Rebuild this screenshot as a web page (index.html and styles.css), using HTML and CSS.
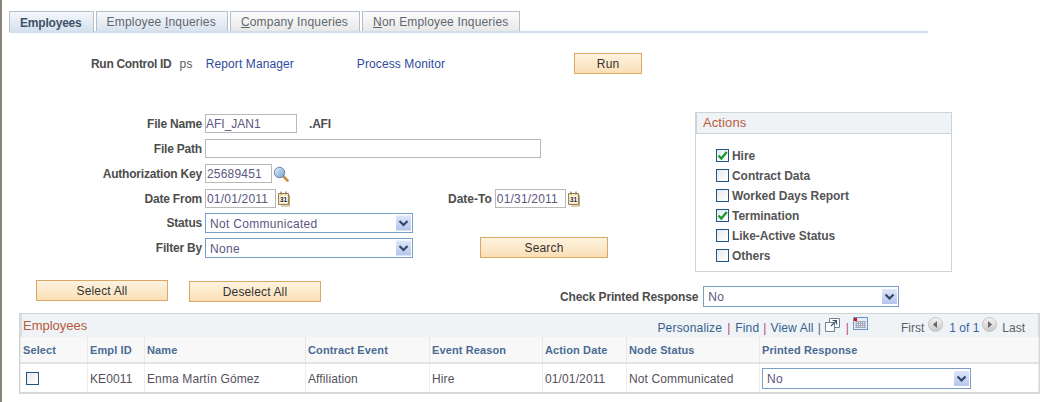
FILE: index.html
```html
<!DOCTYPE html>
<html lang="en">
<head>
<meta charset="utf-8">
<title>Employees</title>
<link rel="stylesheet" href="styles.css">
</head>
<body>
<svg class="defs" width="0" height="0" aria-hidden="true">
  <defs>
    <linearGradient id="arrowbg" x1="0" y1="0" x2="0" y2="1"><stop offset="0" stop-color="#dfe6fa"/><stop offset="1" stop-color="#b4c6ee"/></linearGradient>
    <linearGradient id="navbg" x1="0" y1="0" x2="0" y2="1"><stop offset="0" stop-color="#f4f4f4"/><stop offset="1" stop-color="#c9c9c9"/></linearGradient>
    <linearGradient id="lens" x1="0" y1="0" x2="1" y2="1"><stop offset="0" stop-color="#e6f2fb"/><stop offset="1" stop-color="#6f9fd0"/></linearGradient>
    <symbol id="arrow" viewBox="0 0 15 15">
      <rect width="15" height="15" fill="url(#arrowbg)"/>
      <path d="M3.500 5.500 7.500 9.500 11.500 5.500" fill="none" stroke="#33476b" stroke-width="2.200"/>
    </symbol>
    <symbol id="cal" viewBox="0 0 13 16">
      <path d="M.5 2.500h10v11H.5z" fill="#f3e3b6" stroke="#9a8455"/>
      <path d="M11.500 4v11H3" fill="none" stroke="#b9a674"/>
      <path d="M3 .5v3M8 .5v3" stroke="#6f5f3a"/>
      <rect x="2" y="5" width="7" height="7" fill="#fff"/>
      <text x="5.500" y="11.300" text-anchor="middle" class="cal-day">31</text>
    </symbol>
    <symbol id="lookup" viewBox="0 0 16 16">
      <path d="M10 10l4.500 4.500" stroke="#c98a4b" stroke-width="2.600" stroke-linecap="round"/>
      <circle cx="6.500" cy="6.500" r="5.200" fill="url(#lens)" stroke="#5f86ad"/>
    </symbol>
    <symbol id="check" viewBox="0 0 11 11">
      <path d="M1.500 5.500 4.300 8.500 9.800 2" fill="none" stroke="#129a29" stroke-width="2.200"/>
    </symbol>
  </defs>
</svg>
<div class="page">
  <nav class="tabs">
    <a class="tab tab-active">Employees</a>
    <a class="tab tab-blue">Employee <u>I</u>nqueries</a>
    <a class="tab"><u>C</u>ompany Inqueries</a>
    <a class="tab"><u>N</u>on Employee Inqueries</a>
  </nav>

  <div class="run-row">
    <span class="label run-label">Run Control ID</span>
    <span class="value run-id">ps</span>
    <a class="link report-link">Report Manager</a>
    <a class="link monitor-link">Process Monitor</a>
    <button class="btn btn-run" type="button">Run</button>
  </div>

  <div class="main">
    <div class="form">
      <div class="row">
        <span class="label field-label">File Name</span>
        <span class="input w-name">AFI_JAN1</span>
        <span class="label afi">.AFI</span>
      </div>
      <div class="row">
        <span class="label field-label">File Path</span>
        <span class="input w-path"></span>
      </div>
      <div class="row">
        <span class="label field-label">Authorization Key</span>
        <span class="input w-key">25689451</span>
        <svg class="ico-lookup"><use href="#lookup"/></svg>
      </div>
      <div class="row">
        <span class="label field-label">Date From</span>
        <span class="input w-date">01/01/2011</span>
        <svg class="ico-cal"><use href="#cal"/></svg>
        <span class="label date-to">Date-To</span>
        <span class="input w-date">01/31/2011</span>
        <svg class="ico-cal"><use href="#cal"/></svg>
      </div>
      <div class="row row-select">
        <span class="label field-label">Status</span>
        <span class="select w-select">Not Communicated<svg class="arrow"><use href="#arrow"/></svg></span>
      </div>
      <div class="row row-filter">
        <span class="label field-label">Filter By</span>
        <span class="select w-select">None<svg class="arrow"><use href="#arrow"/></svg></span>
        <button class="btn btn-search" type="button">Search</button>
      </div>
    </div>

    <section class="actions">
      <h2 class="box-title">Actions</h2>
      <ul class="check-list">
        <li><span class="checkbox"><svg class="tick"><use href="#check"/></svg></span>Hire</li>
        <li><span class="checkbox"></span>Contract Data</li>
        <li><span class="checkbox"></span>Worked Days Report</li>
        <li><span class="checkbox"><svg class="tick"><use href="#check"/></svg></span>Termination</li>
        <li><span class="checkbox"></span>Like-Active Status</li>
        <li><span class="checkbox"></span>Others</li>
      </ul>
    </section>
  </div>

  <div class="select-row">
    <button class="btn btn-wide" type="button">Select All</button>
    <button class="btn btn-wide btn-deselect" type="button">Deselect All</button>
    <span class="label check-label">Check Printed Response</span>
    <span class="select w-check">No<svg class="arrow"><use href="#arrow"/></svg></span>
  </div>

  <section class="grid">
    <header class="grid-head">
      <h2 class="grid-title">Employees</h2>
      <div class="grid-tools">
        <a class="link">Personalize</a><i class="sep">|</i><a class="link">Find</a><i class="sep sep-narrow">|</i><a class="link">View All</a><i class="sep sep-dark">|</i>
        <svg class="ico-zoom" width="15" height="14" viewBox="0 0 15 14"><path d="M4.500 .5h10v9h-10z" fill="#fff" stroke="#6d8296"/><path d="M.5 4.500h9v9h-9z" fill="#fff" stroke="#6d8296"/><path d="M6 8l5-5M7.500 2.500h4v4" fill="none" stroke="#42566a" stroke-width="1.200"/></svg>
        <i class="sep sep-tight">|</i>
        <svg class="ico-grid" width="15" height="13" viewBox="0 0 15 13"><rect x=".5" y=".5" width="14" height="12" fill="#e9ecf2" stroke="#6c93d3"/><path d="M2 4.500h11M2 6.500h11M2 8.500h11M2 10.500h11M3.500 4v7M5.500 4v7M7.500 4v7M9.500 4v7M11.500 4v7" stroke="#a3abb9"/><rect x="1" y="1" width="3" height="3" fill="#e01010"/></svg>
        <span class="pager">
          <span class="pg-text">First</span>
          <svg class="ico-nav" width="15" height="15" viewBox="0 0 15 15"><circle cx="7.500" cy="7.500" r="7" fill="url(#navbg)" stroke="#c4c4c4"/><path d="M9 4v7L5 7.500z" fill="#666"/></svg>
          <a class="pg-count">1 of 1</a>
          <svg class="ico-nav ico-next" width="15" height="15" viewBox="0 0 15 15"><circle cx="7.500" cy="7.500" r="7" fill="url(#navbg)" stroke="#c4c4c4"/><path d="M6 4v7l4-3.500z" fill="#666"/></svg>
          <span class="pg-text">Last</span>
        </span>
      </div>
    </header>
    <table class="table">
      <colgroup>
        <col class="c-select"><col class="c-id"><col class="c-name"><col class="c-event"><col class="c-reason"><col class="c-date"><col class="c-node"><col class="c-print">
      </colgroup>
      <thead>
        <tr><th>Select</th><th>Empl ID</th><th>Name</th><th>Contract Event</th><th>Event Reason</th><th>Action Date</th><th>Node Status</th><th>Printed Response</th></tr>
      </thead>
      <tbody>
        <tr>
          <td><span class="checkbox cell-check"></span></td>
          <td>KE0011</td>
          <td>Enma Martín Gómez</td>
          <td>Affiliation</td>
          <td>Hire</td>
          <td>01/01/2011</td>
          <td>Not Communicated</td>
          <td><span class="select w-print">No<svg class="arrow"><use href="#arrow"/></svg></span></td>
        </tr>
      </tbody>
    </table>
  </section>
</div>
</body>
</html>
```
FILE: styles.css
```css
* { box-sizing: border-box; }
html, body { margin: 0; padding: 0; background: #fff; }
body { font: 12px/14px "Liberation Sans", Arial, sans-serif; color: #5a5a5a; overflow: hidden; }
.defs { display: block; height: 0; }
u { text-decoration: underline; }
i { font-style: normal; }
.cal-day { font: bold 6.500px "Liberation Sans", Arial, sans-serif; fill: #222; }

.page { height: 402px; border-left: 2px solid #8a8378; padding-top: 10px; }

/* tabs */
.tabs { display: flex; gap: 2px; margin-left: 7px; width: 919px; height: 23px; align-items: flex-end; border-bottom: 2px solid #d3deeb; }
.tab { display: block; height: 20px; padding: 3px 11px 0 10px; border: 1px solid #b5bfcc; border-bottom: 0; background: linear-gradient(#fcfcfc, #e8e8e8); color: #61666d; letter-spacing: .18px; white-space: nowrap; }
.tab-active { height: 21px; padding: 4px 11px 0 10px; margin-bottom: -1px; background: linear-gradient(#f4f7fb, #d4e0ee); color: #3f5168; font-weight: bold; letter-spacing: -.2px; }
.tab-blue { background: linear-gradient(#f6f8fb, #d8e3f0); }

/* run control row */
.run-row { display: flex; align-items: center; height: 21px; margin: 20px 0 0 89px; }
.label { font-weight: bold; color: #4d4d4d; white-space: nowrap; letter-spacing: -.2px; }
.run-label { letter-spacing: -.3px; }
.value { color: #5a5a5a; letter-spacing: .3px; }
.run-id { margin-left: 8px; }
.link { color: #2f4a9c; white-space: nowrap; letter-spacing: .1px; }
.report-link { margin-left: 13px; }
.monitor-link { margin-left: 63px; }

.btn { display: block; padding: 0; font: 12px "Liberation Sans", Arial, sans-serif; color: #333; border: 1px solid #dba766; background: linear-gradient(#fdf3df, #fbdfb6); letter-spacing: .15px; }
.btn-run { width: 68px; height: 21px; margin-left: 129px; }
.btn-search { width: 128px; height: 21px; margin: -1px 0 0 67px; }
.btn-wide { width: 132px; height: 21px; }
.btn-deselect { margin: 1px 0 0 21px; }

/* main */
.main { display: flex; align-items: flex-start; margin-top: 38px; }
.form { width: 693px; padding-top: 2px; }
.row { display: flex; align-items: center; height: 19px; margin-bottom: 6px; }
.row-select { height: 20px; margin-bottom: 5px; margin-top: -1px; }
.row-filter { height: 20px; margin-bottom: 0; }
.field-label { width: 203px; padding-right: 3px; text-align: right; }
.input { display: block; height: 19px; padding: 2px 0 0 1px; border: 1px solid #b9b9b9; background: #fff; color: #5c5680; letter-spacing: .2px; white-space: nowrap; }
.w-name { width: 92px; padding-left: 0; letter-spacing: 0; }
.w-path { width: 336px; }
.w-key { width: 67px; }
.w-date { width: 71px; }
.afi { margin-left: 12px; }
.ico-lookup { width: 16px; height: 16px; margin-left: 1px; }
.ico-cal { width: 13px; height: 16px; margin-left: 2px; }
.date-to { margin-left: 157px; margin-right: 3px; letter-spacing: 0; }
.select { position: relative; display: block; height: 20px; padding: 3px 0 0 4px; border: 1px solid #7b9ec4; background: #fff; color: #5c5680; letter-spacing: .3px; white-space: nowrap; }
.w-select { width: 208px; }
.w-check { width: 196px; height: 21px; margin-left: 5px; }
.w-print { width: 209px; height: 21px; }
.arrow { position: absolute; right: 1px; top: 1px; width: 15px; height: 16px; }
.w-check .arrow, .w-print .arrow { height: 17px; }

/* actions */
.actions { width: 257px; height: 160px; border: 1px solid #ccd3da; }
.box-title { height: 21px; margin: 0; padding: 3px 0 0 6px; background: #f0f3f5; border-bottom: 1px solid #ccd3da; border-left: 1px solid #ccd3da; font: 13px/14px "Liberation Sans", Arial, sans-serif; letter-spacing: .1px; color: #b65a3c; }
.check-list { list-style: none; margin: 12px 0 0; padding: 0 0 0 20px; font-weight: bold; color: #555; letter-spacing: -.05px; }
.check-list li { display: flex; align-items: center; height: 20px; }
.check-list .checkbox { margin-bottom: 2px; }
.checkbox { display: flex; align-items: center; justify-content: center; flex: none; width: 13px; height: 13px; margin-right: 3px; border: 1px solid #1f5488; background: linear-gradient(135deg, #e9e9e9, #fff); }
.tick { width: 11px; height: 11px; }

/* select row */
.select-row { display: flex; align-items: flex-start; margin: 8px 0 0 34px; }
.check-label { margin: 10px 0 0 239px; letter-spacing: -.14px; }
.w-check { margin-top: 6px; }

/* grid */
.grid { width: 1021px; height: 81px; margin: 6px 0 0 17px; border: 1px solid #cfd4d9; border-bottom: 2px solid #d5d8db; border-right: 2px solid #d5d8db; }
.grid-head { display: flex; justify-content: space-between; height: 23px; background: #f0f3f5; border-left: 2px solid #dadfe3; }
.grid-title { margin: 4px 0 0 1px; font: 13px/16px "Liberation Sans", Arial, sans-serif; color: #b65a3c; }
.grid-tools { display: flex; align-items: center; padding: 4px 13px 0 0; }
.sep { margin: 0 5px; color: #b5477a; }
.sep-narrow { margin: 0 4px; }
.sep-dark { color: #506080; margin: 0 4px; }
.sep-tight { margin: 0 4px; }
.grid-tools .link { color: #33628f; letter-spacing: .18px; }
.ico-zoom { margin: -6px 2px 0 0; }
.ico-grid { margin: -8px 0 0 0; }
.pager { display: flex; align-items: center; margin-left: 33px; }
.pg-text { color: #5b5f66; }
.pg-count { margin: 0 3px 0 6px; color: #3b5fa5; white-space: nowrap; }
.ico-nav { margin: -7px 0 0 4px; }
.ico-next { margin-left: 0; }
.pager .ico-next + .pg-text { margin-left: 5px; }

.table { width: 1018px; table-layout: fixed; border-collapse: collapse; font: 12px/14px "Liberation Sans", Arial, sans-serif; }
.c-select { width: 67px; } .c-id { width: 57px; } .c-name { width: 161px; } .c-event { width: 124px; }
.c-reason { width: 113px; } .c-date { width: 84px; } .c-node { width: 133px; } .c-print { width: 279px; }
.table th { height: 26px; padding: 0 0 0 2px; text-align: left; font-weight: bold; font-size: 11px; letter-spacing: .12px; color: #4a6b94; background: #f8f8f8; border-right: 1px solid #e8e8e8; border-left: 1px solid #e8e8e8; border-bottom: 2px solid #e3e3e3; }
.table td { height: 28px; padding: 2px 0 0 2px; color: #55505c; letter-spacing: .12px; border: 1px solid #ececec; border-top: 0; border-bottom: 0; white-space: nowrap; }
.cell-check { margin: 0 0 1px 3px; width: 13px; }
```
